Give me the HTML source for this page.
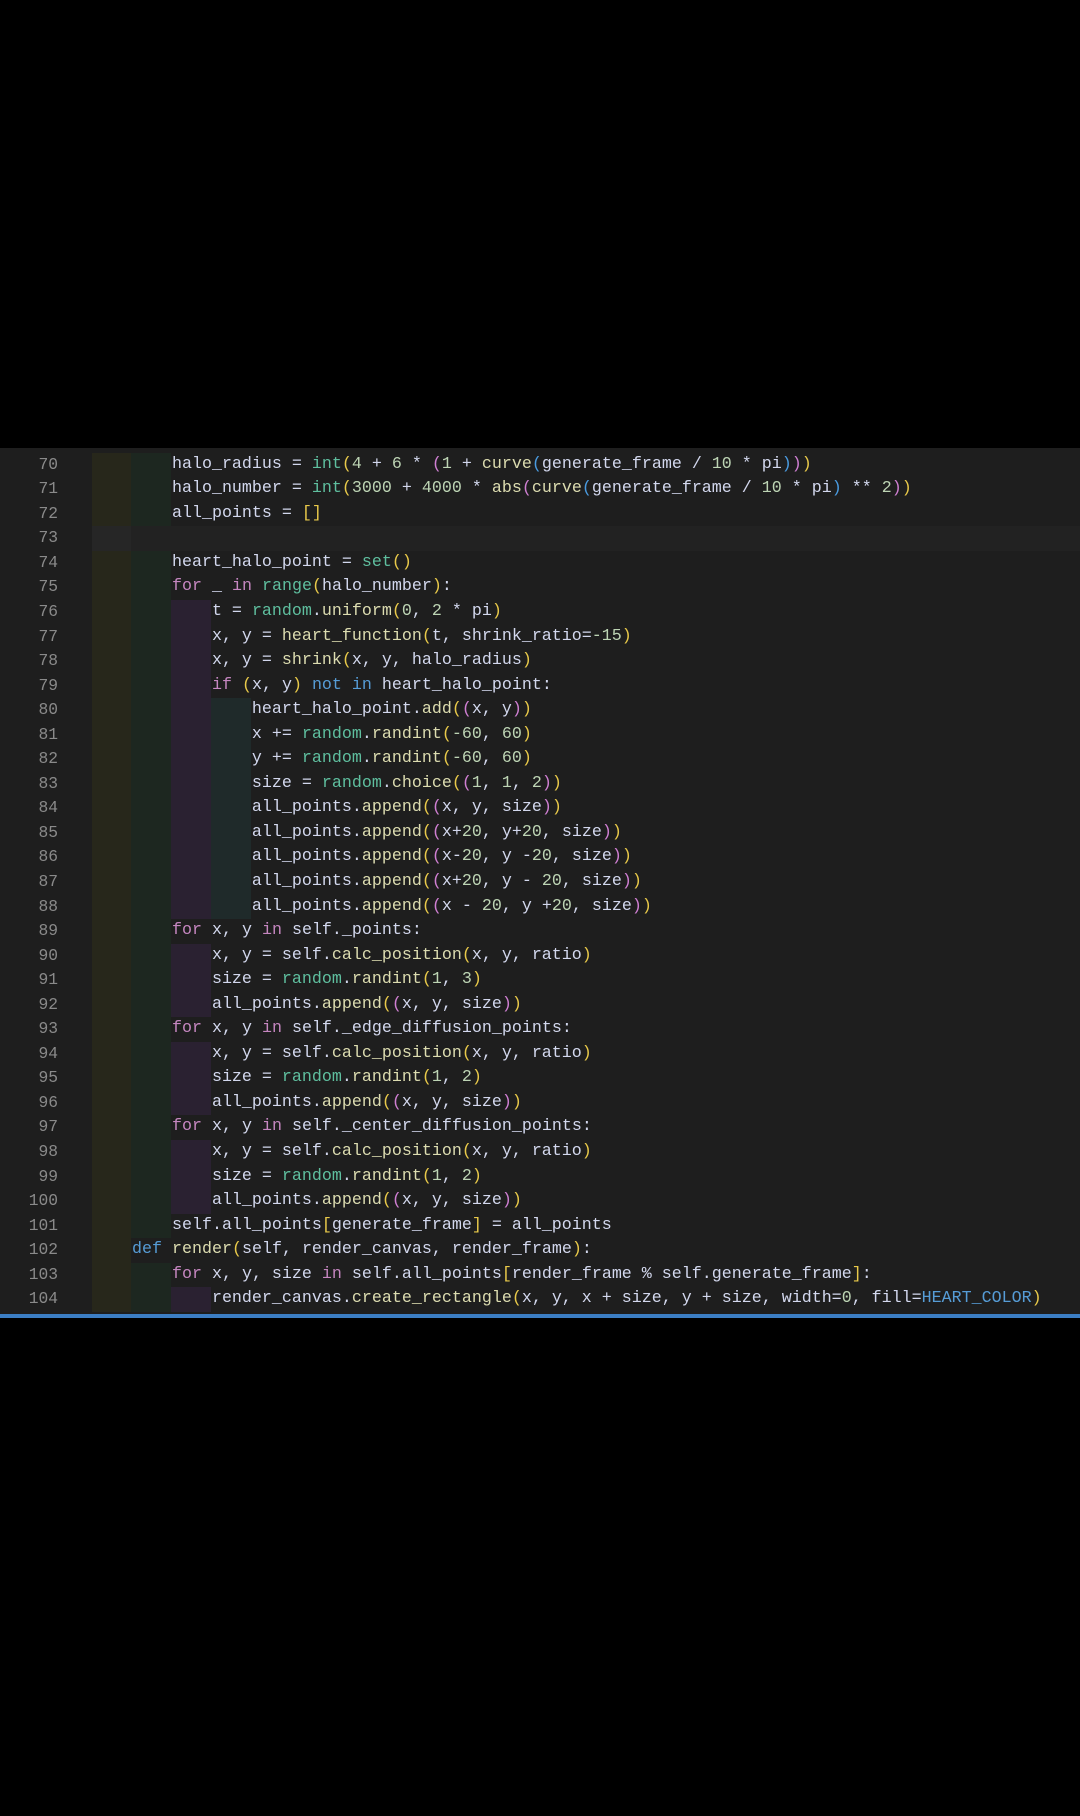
<!DOCTYPE html>
<html><head><meta charset="utf-8"><style>
html,body{margin:0;padding:0;background:#000;}
body{width:1080px;height:1816px;position:relative;overflow:hidden;}
#ed{position:absolute;left:0;top:448px;width:1080px;height:867px;background:#1e1e1e;}
#bl{position:absolute;left:0;top:1314px;width:1080px;height:4px;background:#3c7ec4;}
#code{position:absolute;left:0;top:452.7px;width:1080px;}
.l{position:relative;height:24.56px;line-height:24.56px;font-family:"Liberation Mono",monospace;font-size:16.66px;color:#d3d8ee;white-space:pre;}
.ln{position:absolute;left:0;width:58px;text-align:right;color:#8a8a8a;font-size:16.3px;}
.t{position:absolute;left:92px;}
.lv1{background:linear-gradient(to right,transparent 92px,#27271b 92px,#27271b 131px,transparent 131px);}
.lv2{background:linear-gradient(to right,transparent 92px,#27271b 92px,#27271b 131px,#1d2720 131px,#1d2720 171px,transparent 171px);}
.lv3{background:linear-gradient(to right,transparent 92px,#27271b 92px,#27271b 131px,#1d2720 131px,#1d2720 171px,#2a2131 171px,#2a2131 211px,transparent 211px);}
.lv4{background:linear-gradient(to right,transparent 92px,#27271b 92px,#27271b 131px,#1d2720 131px,#1d2720 171px,#2a2131 171px,#2a2131 211px,#1f2a2a 211px,#1f2a2a 251px,transparent 251px);}
.cur{background:linear-gradient(to right,transparent 92px,#262626 92px,#262626 131px,#222 131px);}
.b{color:#5fbf9f}.f{color:#dcdcb0}.k{color:#c586c0}.kb{color:#569cd6}.n{color:#bdd4b4}
.p1{color:#e8c94a}.p2{color:#cf7fd2}.p3{color:#4a9be0}
</style></head><body>
<div id="ed"></div>
<div id="code">
<div class="l lv2"><span class="ln">70</span><span class="t">        halo_radius = <span class="b">int</span><span class="p1">(</span><span class="n">4</span> + <span class="n">6</span> * <span class="p2">(</span><span class="n">1</span> + <span class="f">curve</span><span class="p3">(</span>generate_frame / <span class="n">10</span> * pi<span class="p3">)</span><span class="p2">)</span><span class="p1">)</span></span></div>
<div class="l lv2"><span class="ln">71</span><span class="t">        halo_number = <span class="b">int</span><span class="p1">(</span><span class="n">3000</span> + <span class="n">4000</span> * <span class="f">abs</span><span class="p2">(</span><span class="f">curve</span><span class="p3">(</span>generate_frame / <span class="n">10</span> * pi<span class="p3">)</span> ** <span class="n">2</span><span class="p2">)</span><span class="p1">)</span></span></div>
<div class="l lv2"><span class="ln">72</span><span class="t">        all_points = <span class="p1">[]</span></span></div>
<div class="l cur"><span class="ln">73</span><span class="t"></span></div>
<div class="l lv2"><span class="ln">74</span><span class="t">        heart_halo_point = <span class="b">set</span><span class="p1">()</span></span></div>
<div class="l lv2"><span class="ln">75</span><span class="t">        <span class="k">for</span> _ <span class="k">in</span> <span class="b">range</span><span class="p1">(</span>halo_number<span class="p1">)</span>:</span></div>
<div class="l lv3"><span class="ln">76</span><span class="t">            t = <span class="b">random</span>.<span class="f">uniform</span><span class="p1">(</span><span class="n">0</span>, <span class="n">2</span> * pi<span class="p1">)</span></span></div>
<div class="l lv3"><span class="ln">77</span><span class="t">            x, y = <span class="f">heart_function</span><span class="p1">(</span>t, shrink_ratio=<span class="n">-15</span><span class="p1">)</span></span></div>
<div class="l lv3"><span class="ln">78</span><span class="t">            x, y = <span class="f">shrink</span><span class="p1">(</span>x, y, halo_radius<span class="p1">)</span></span></div>
<div class="l lv3"><span class="ln">79</span><span class="t">            <span class="k">if</span> <span class="p1">(</span>x, y<span class="p1">)</span> <span class="kb">not in</span> heart_halo_point:</span></div>
<div class="l lv4"><span class="ln">80</span><span class="t">                heart_halo_point.<span class="f">add</span><span class="p1">(</span><span class="p2">(</span>x, y<span class="p2">)</span><span class="p1">)</span></span></div>
<div class="l lv4"><span class="ln">81</span><span class="t">                x += <span class="b">random</span>.<span class="f">randint</span><span class="p1">(</span><span class="n">-60</span>, <span class="n">60</span><span class="p1">)</span></span></div>
<div class="l lv4"><span class="ln">82</span><span class="t">                y += <span class="b">random</span>.<span class="f">randint</span><span class="p1">(</span><span class="n">-60</span>, <span class="n">60</span><span class="p1">)</span></span></div>
<div class="l lv4"><span class="ln">83</span><span class="t">                size = <span class="b">random</span>.<span class="f">choice</span><span class="p1">(</span><span class="p2">(</span><span class="n">1</span>, <span class="n">1</span>, <span class="n">2</span><span class="p2">)</span><span class="p1">)</span></span></div>
<div class="l lv4"><span class="ln">84</span><span class="t">                all_points.<span class="f">append</span><span class="p1">(</span><span class="p2">(</span>x, y, size<span class="p2">)</span><span class="p1">)</span></span></div>
<div class="l lv4"><span class="ln">85</span><span class="t">                all_points.<span class="f">append</span><span class="p1">(</span><span class="p2">(</span>x+<span class="n">20</span>, y+<span class="n">20</span>, size<span class="p2">)</span><span class="p1">)</span></span></div>
<div class="l lv4"><span class="ln">86</span><span class="t">                all_points.<span class="f">append</span><span class="p1">(</span><span class="p2">(</span>x-<span class="n">20</span>, y -<span class="n">20</span>, size<span class="p2">)</span><span class="p1">)</span></span></div>
<div class="l lv4"><span class="ln">87</span><span class="t">                all_points.<span class="f">append</span><span class="p1">(</span><span class="p2">(</span>x+<span class="n">20</span>, y - <span class="n">20</span>, size<span class="p2">)</span><span class="p1">)</span></span></div>
<div class="l lv4"><span class="ln">88</span><span class="t">                all_points.<span class="f">append</span><span class="p1">(</span><span class="p2">(</span>x - <span class="n">20</span>, y +<span class="n">20</span>, size<span class="p2">)</span><span class="p1">)</span></span></div>
<div class="l lv2"><span class="ln">89</span><span class="t">        <span class="k">for</span> x, y <span class="k">in</span> self._points:</span></div>
<div class="l lv3"><span class="ln">90</span><span class="t">            x, y = self.<span class="f">calc_position</span><span class="p1">(</span>x, y, ratio<span class="p1">)</span></span></div>
<div class="l lv3"><span class="ln">91</span><span class="t">            size = <span class="b">random</span>.<span class="f">randint</span><span class="p1">(</span><span class="n">1</span>, <span class="n">3</span><span class="p1">)</span></span></div>
<div class="l lv3"><span class="ln">92</span><span class="t">            all_points.<span class="f">append</span><span class="p1">(</span><span class="p2">(</span>x, y, size<span class="p2">)</span><span class="p1">)</span></span></div>
<div class="l lv2"><span class="ln">93</span><span class="t">        <span class="k">for</span> x, y <span class="k">in</span> self._edge_diffusion_points:</span></div>
<div class="l lv3"><span class="ln">94</span><span class="t">            x, y = self.<span class="f">calc_position</span><span class="p1">(</span>x, y, ratio<span class="p1">)</span></span></div>
<div class="l lv3"><span class="ln">95</span><span class="t">            size = <span class="b">random</span>.<span class="f">randint</span><span class="p1">(</span><span class="n">1</span>, <span class="n">2</span><span class="p1">)</span></span></div>
<div class="l lv3"><span class="ln">96</span><span class="t">            all_points.<span class="f">append</span><span class="p1">(</span><span class="p2">(</span>x, y, size<span class="p2">)</span><span class="p1">)</span></span></div>
<div class="l lv2"><span class="ln">97</span><span class="t">        <span class="k">for</span> x, y <span class="k">in</span> self._center_diffusion_points:</span></div>
<div class="l lv3"><span class="ln">98</span><span class="t">            x, y = self.<span class="f">calc_position</span><span class="p1">(</span>x, y, ratio<span class="p1">)</span></span></div>
<div class="l lv3"><span class="ln">99</span><span class="t">            size = <span class="b">random</span>.<span class="f">randint</span><span class="p1">(</span><span class="n">1</span>, <span class="n">2</span><span class="p1">)</span></span></div>
<div class="l lv3"><span class="ln">100</span><span class="t">            all_points.<span class="f">append</span><span class="p1">(</span><span class="p2">(</span>x, y, size<span class="p2">)</span><span class="p1">)</span></span></div>
<div class="l lv2"><span class="ln">101</span><span class="t">        self.all_points<span class="p1">[</span>generate_frame<span class="p1">]</span> = all_points</span></div>
<div class="l lv1"><span class="ln">102</span><span class="t">    <span class="kb">def</span> <span class="f">render</span><span class="p1">(</span>self, render_canvas, render_frame<span class="p1">)</span>:</span></div>
<div class="l lv2"><span class="ln">103</span><span class="t">        <span class="k">for</span> x, y, size <span class="k">in</span> self.all_points<span class="p1">[</span>render_frame % self.generate_frame<span class="p1">]</span>:</span></div>
<div class="l lv3"><span class="ln">104</span><span class="t">            render_canvas.<span class="f">create_rectangle</span><span class="p1">(</span>x, y, x + size, y + size, width=<span class="n">0</span>, fill=<span class="kb">HEART_COLOR</span><span class="p1">)</span></span></div>
</div>
<div id="bl"></div>
</body></html>
